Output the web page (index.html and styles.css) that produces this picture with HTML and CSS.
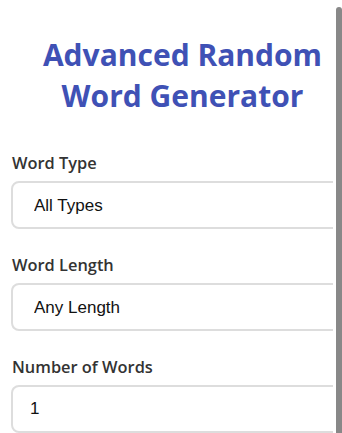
FILE: index.html
```html
<!DOCTYPE html>
<html lang="en">
<head>
<meta charset="utf-8">
<title>Advanced Random Word Generator</title>
<link rel="stylesheet" href="styles.css">
</head>
<body>
<div class="page">
  <div class="viewport">
    <div class="content">
      <h1 class="title">Advanced Random Word Generator</h1>
      <div class="group">
        <label class="label" for="type">Word Type</label>
        <select class="field field-select" id="type">
          <option>All Types</option>
          <option>Nouns</option>
          <option>Verbs</option>
          <option>Adjectives</option>
        </select>
      </div>
      <div class="group">
        <label class="label" for="length">Word Length</label>
        <select class="field field-select" id="length">
          <option>Any Length</option>
          <option>Short</option>
          <option>Medium</option>
          <option>Long</option>
        </select>
      </div>
      <div class="group">
        <label class="label" for="count">Number of Words</label>
        <input class="field" id="count" type="number" value="1">
      </div>
    </div>
  </div>
  <div class="scrolltrack"><div class="scrollthumb"></div></div>
</div>
</body>
</html>
```
FILE: styles.css
```css
html, body {
  margin: 0;
  padding: 0;
  background: #ffffff;
}
body {
  font-family: "Open Sans", "Noto Sans", sans-serif;
  color: #333333;
  overflow: hidden;
}
.page {
  display: flex;
  height: 433px;
}
.viewport {
  width: 333px;
  overflow: hidden;
  flex: none;
}
.content {
  width: 365px;
  box-sizing: border-box;
  padding: 34px 11px 0 11px;
}
.title {
  margin: 0 0 36px 0;
  font-size: 30px;
  line-height: 41px;
  font-weight: 700;
  color: #3f51b5;
  text-align: center;
}
.group {
  margin-bottom: 25px;
}
.label {
  display: block;
  font-size: 16.4px;
  line-height: 22px;
  font-weight: 600;
  color: #333333;
  margin: 0 0 7px 1px;
}
.field {
  display: block;
  width: 100%;
  height: 48px;
  box-sizing: border-box;
  border: 2px solid #dddddd;
  border-radius: 8px;
  padding: 0 17px;
  font-family: "Liberation Sans", Arial, sans-serif;
  font-size: 17px;
  color: #111111;
  background: #ffffff;
  outline: none;
}
.field-select {
  -webkit-appearance: none;
  appearance: none;
  padding-left: 21px;
}
.field::-webkit-inner-spin-button,
.field::-webkit-outer-spin-button {
  -webkit-appearance: none;
  margin: 0;
}
.scrolltrack {
  flex: none;
  width: 9px;
  padding-left: 3px;
  box-sizing: border-box;
  padding-top: 7px;
}
.scrollthumb {
  height: 100%;
  background: #888888;
  border-radius: 3px 3px 0 0;
}
```
